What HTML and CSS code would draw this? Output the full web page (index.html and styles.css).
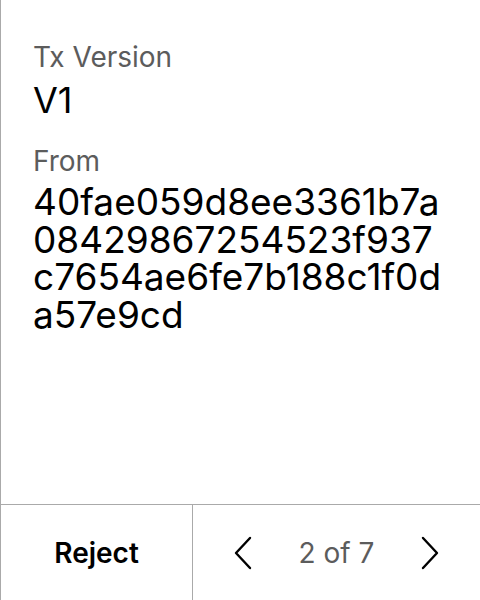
FILE: index.html
```html
<!DOCTYPE html>
<html>
<head>
<meta charset="utf-8">
<link rel="stylesheet" href="styles.css">
</head>
<body>
<div class="screen">
  <div class="content">
    <div class="field">
      <div class="label">Tx Version</div>
      <div class="value">V1</div>
    </div>
    <div class="field">
      <div class="label">From</div>
      <div class="hash">
        <div class="hash-line">40fae059d8ee3361b7a</div>
        <div class="hash-line">08429867254523f937</div>
        <div class="hash-line">c7654ae6fe7b188c1f0d</div>
        <div class="hash-line">a57e9cd</div>
      </div>
    </div>
  </div>
  <div class="footer">
    <div class="reject">Reject</div>
    <div class="pager">
      <svg class="chev" width="20" height="34" viewBox="0 0 20 34"><path d="M17 2 L3 17 L17 32" fill="none" stroke="#000" stroke-width="2.4" stroke-linecap="round" stroke-linejoin="round"/></svg>
      <span class="count">2 of 7</span>
      <svg class="chev" width="20" height="34" viewBox="0 0 20 34"><path d="M3 2 L17 17 L3 32" fill="none" stroke="#000" stroke-width="2.4" stroke-linecap="round" stroke-linejoin="round"/></svg>
    </div>
  </div>
</div>
</body>
</html>
```
FILE: styles.css
```css
html, body {
  margin: 0;
  padding: 0;
  background: #fff;
}
body {
  font-family: Inter, "Liberation Sans", sans-serif;
  color: #000;
}
.screen {
  width: 479px;
  height: 600px;
  border-left: 1px solid #aaa;
  display: flex;
  flex-direction: column;
}
.content {
  flex: 1;
  padding: 40px 0 0 32px;
  display: flex;
  flex-direction: column;
  gap: 22px;
}
.field {
  display: flex;
  flex-direction: column;
  gap: 4px;
}
.label {
  font-size: 28px;
  color: #5c5c5c;
  line-height: 34px;
}
.value {
  font-size: 36px;
  line-height: 44px;
}
.hash {
  font-size: 37px;
  margin-top: 1px;
}
.hash-line {
  height: 37.5px;
  line-height: 37.5px;
  white-space: nowrap;
}
.footer {
  height: 95px;
  border-top: 1px solid #aaa;
  display: flex;
}
.reject {
  width: 191px;
  border-right: 1px solid #aaa;
  display: flex;
  align-items: center;
  justify-content: center;
  font-size: 28px;
  font-weight: 600;
}
.pager {
  flex: 1;
  display: flex;
  align-items: center;
  justify-content: space-between;
  padding: 0 40px;
}
.count {
  font-size: 28px;
  color: #5c5c5c;
}
```
